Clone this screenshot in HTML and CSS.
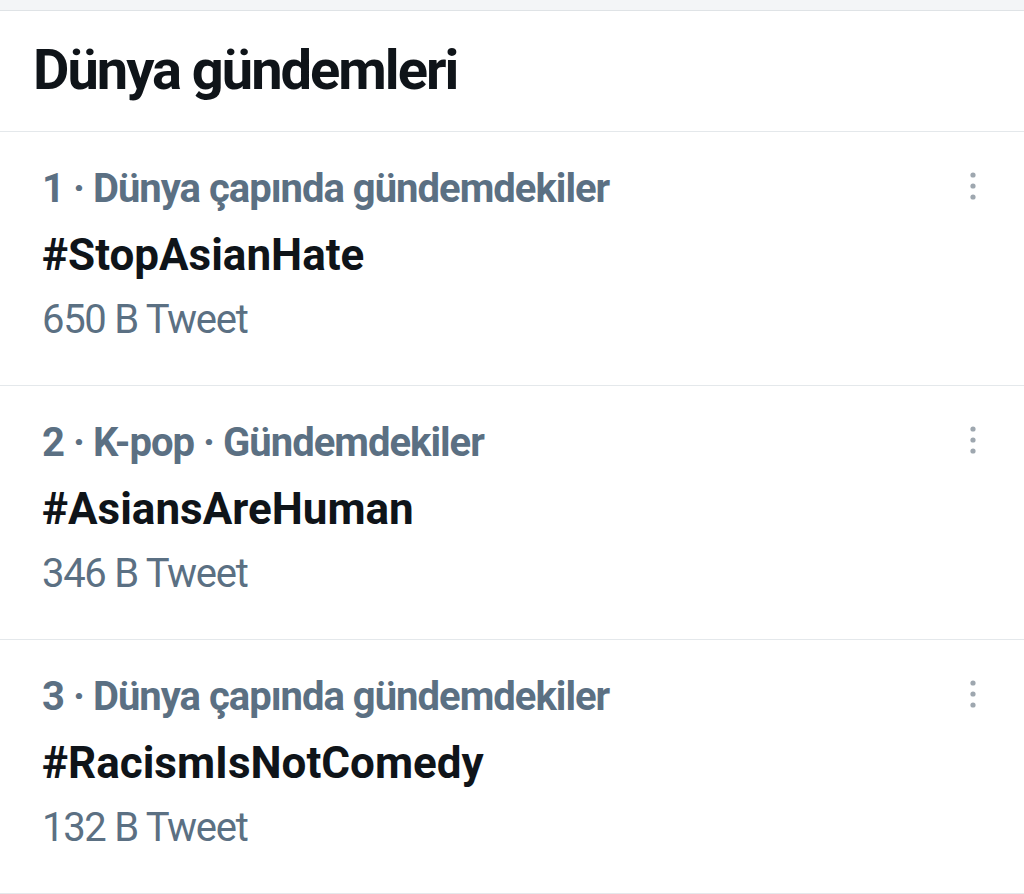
FILE: index.html
```html
<!DOCTYPE html>
<html lang="tr">
<head>
<meta charset="utf-8">
<title>Dünya gündemleri</title>
<link rel="stylesheet" href="styles.css">
</head>
<body>
<div class="top-strip"></div>
<section class="panel">
  <h1 class="panel-title">Dünya gündemleri</h1>
  <div class="trend">
    <div class="trend-body">
      <div class="trend-meta">1 · Dünya çapında gündemdekiler</div>
      <div class="trend-name">#StopAsianHate</div>
      <div class="trend-count">650 B Tweet</div>
    </div>
    <svg class="trend-more" viewBox="0 0 12 30" width="12" height="30" aria-hidden="true"><circle cx="6" cy="4" r="2.6"/><circle cx="6" cy="15" r="2.6"/><circle cx="6" cy="26" r="2.6"/></svg>
  </div>
  <div class="trend">
    <div class="trend-body">
      <div class="trend-meta">2 · K-pop · Gündemdekiler</div>
      <div class="trend-name">#AsiansAreHuman</div>
      <div class="trend-count">346 B Tweet</div>
    </div>
    <svg class="trend-more" viewBox="0 0 12 30" width="12" height="30" aria-hidden="true"><circle cx="6" cy="4" r="2.6"/><circle cx="6" cy="15" r="2.6"/><circle cx="6" cy="26" r="2.6"/></svg>
  </div>
  <div class="trend">
    <div class="trend-body">
      <div class="trend-meta">3 · Dünya çapında gündemdekiler</div>
      <div class="trend-name">#RacismIsNotComedy</div>
      <div class="trend-count">132 B Tweet</div>
    </div>
    <svg class="trend-more" viewBox="0 0 12 30" width="12" height="30" aria-hidden="true"><circle cx="6" cy="4" r="2.6"/><circle cx="6" cy="15" r="2.6"/><circle cx="6" cy="26" r="2.6"/></svg>
  </div>
</section>
</body>
</html>
```

FILE: styles.css
```css
html, body {
  margin: 0;
  padding: 0;
  background: #ffffff;
}
body {
  font-family: Roboto, "Liberation Sans", Arial, sans-serif;
}
.top-strip {
  height: 10px;
  background: #f3f5f7;
  border-bottom: 1px solid #dfe3e6;
}
.panel {
  display: flex;
  flex-direction: column;
}
.panel-title {
  margin: 0;
  height: 121px;
  box-sizing: border-box;
  padding: 29px 0 0 33px;
  font-size: 56px;
  line-height: 60px;
  font-weight: 700;
  letter-spacing: -2px;
  color: #0f1419;
  border-bottom: 1px solid #e4e8eb;
}
.trend {
  display: flex;
  align-items: flex-start;
  justify-content: space-between;
  padding: 32px 45px 40px 42px;
  border-bottom: 1px solid #e4e8eb;
}
.trend-body {
  display: flex;
  flex-direction: column;
}
.trend-meta {
  font-size: 40px;
  line-height: 50px;
  font-weight: 700;
  letter-spacing: -1px;
  color: #5b7083;
}
.trend-name {
  margin-top: 11px;
  font-size: 44px;
  line-height: 60px;
  font-weight: 700;
  color: #0f1419;
}
.trend-count {
  margin-top: 10px;
  font-size: 40px;
  line-height: 50px;
  font-weight: 400;
  letter-spacing: -1.3px;
  color: #5b7083;
}
.trend-more {
  margin-top: 7px;
  fill: #9ea7af;
  flex: none;
}
```
